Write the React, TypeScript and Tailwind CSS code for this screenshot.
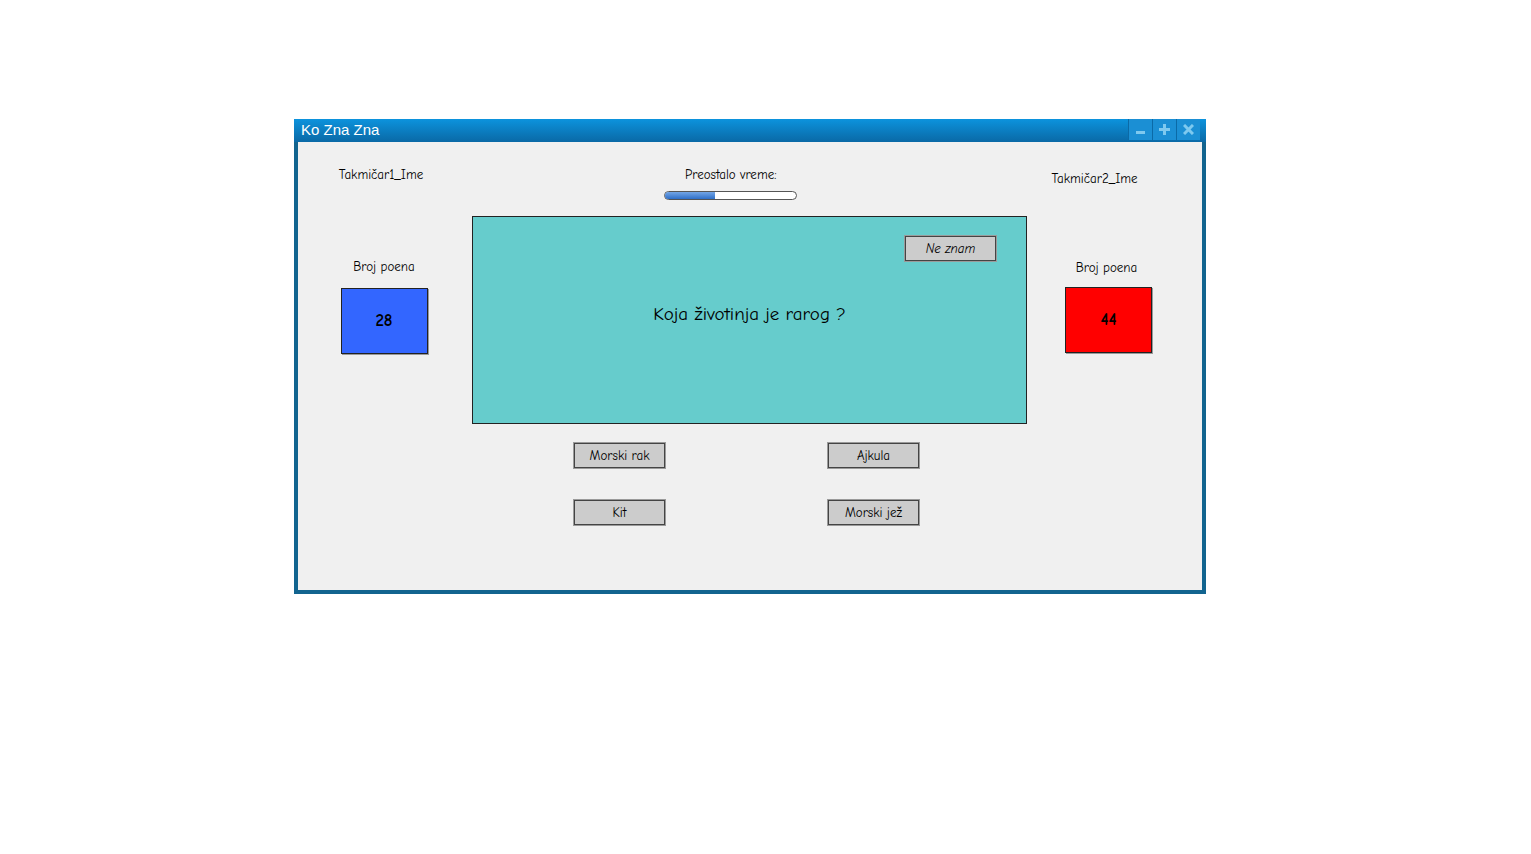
import React from "react";

const sketch = { fontFamily: '"Comic Sans MS", "Comic Neue", "DejaVu Sans", sans-serif' };

function SketchButton({ label, className = "" }: { label: string; className?: string }) {
  return (
    <div
      className={`w-[91px] h-[25px] bg-[#cccccc] border border-[#444] shadow-[0_0_0_1px_#9a9a9a] flex items-center justify-center text-[13px] text-black ${className}`}
    >
      {label}
    </div>
  );
}

function ScoreBox({ value, color }: { value: number; color: string }) {
  return (
    <div
      className={`w-[87px] h-[66px] ${color} border border-[#222] shadow-[1px_1px_0_#999] flex items-center justify-center text-[17px] font-bold text-black`}
    >
      {value}
    </div>
  );
}

function TitleButton({ children }: { children: React.ReactNode }) {
  return (
    <div className="w-[24px] h-[21px] bg-[#1b8fd4] border-l border-[#0b6aa6] flex items-center justify-center">
      {children}
    </div>
  );
}

export default function App() {
  return (
    <div className="w-[1531px] h-[854px] bg-white relative">
      <div className="pt-[119px] pl-[294px]">
        <div className="w-[912px] h-[475px] border-[4px] border-t-0 border-[#12648f] flex flex-col bg-[#f0f0f0]">
          {/* title bar */}
          <div className="h-[23px] -mx-[4px] bg-gradient-to-b from-[#0c93dd] to-[#0a69a6] flex items-center justify-between">
            <span className="pl-[7px] text-white text-[15px]" style={{ fontFamily: '"Liberation Sans", Arial, sans-serif' }}>
              Ko Zna Zna
            </span>
            <div className="flex pr-[6px] h-[21px] self-start">
              <TitleButton>
                <div className="w-[9px] h-[3px] bg-[#7ec9ef] mt-[6px]" />
              </TitleButton>
              <TitleButton>
                <svg width="11" height="11" viewBox="0 0 11 11">
                  <path d="M4 0h3v4h4v3H7v4H4V7H0V4h4z" fill="#7ec9ef" />
                </svg>
              </TitleButton>
              <TitleButton>
                <svg width="11" height="11" viewBox="0 0 11 11">
                  <path d="M1 1 L10 10 M10 1 L1 10" stroke="#7ec9ef" strokeWidth="3" />
                </svg>
              </TitleButton>
            </div>
          </div>

          {/* content */}
          <div className="flex flex-1" style={sketch}>
            {/* left player */}
            <div className="w-[174px] flex flex-col items-center">
              <div className="mt-[25px] text-[13px] leading-[16px] text-black -ml-[8px]">Takmičar1_Ime</div>
              <div className="mt-[76px] text-[13px] leading-[16px] text-black -ml-[2px]">Broj poena</div>
              <div className="mt-[13px] -ml-[2px]">
                <ScoreBox value={28} color="bg-[#3366ff]" />
              </div>
            </div>

            {/* center */}
            <div className="w-[555px] flex flex-col">
              <div className="mt-[25px] ml-[213px] text-[13px] leading-[16px] text-black">Preostalo vreme:</div>
              <div className="mt-[8px] ml-[192px] w-[133px] h-[9px] rounded-full border border-[#555] bg-white overflow-hidden">
                <div className="w-[50px] h-full bg-gradient-to-b from-[#74a6e6] to-[#2e6fc8]" />
              </div>
              <div className="mt-[16px] h-[208px] bg-[#66cccc] border border-[#222] flex flex-col">
                <div className="flex justify-end pr-[30px] pt-[19px]">
                  <SketchButton label="Ne znam" className="italic" />
                </div>
                <div className="mt-[41px] text-center text-[19px] leading-[24px] text-black">Koja životinja je rarog ?</div>
              </div>
              <div className="grid grid-cols-2 w-[345px] ml-[102px] mt-[19px] gap-x-[163px] gap-y-[32px]">
                <SketchButton label="Morski rak" />
                <SketchButton label="Ajkula" />
                <SketchButton label="Kit" />
                <SketchButton label="Morski jež" />
              </div>
            </div>

            {/* right player */}
            <div className="flex-1 flex flex-col items-center pr-[12px]">
              <div className="mt-[29px] text-[13px] leading-[16px] text-black -ml-[28px]">Takmičar2_Ime</div>
              <div className="mt-[73px] text-[13px] leading-[16px] text-black -ml-[4px]">Broj poena</div>
              <div className="mt-[11px]">
                <ScoreBox value={44} color="bg-[#ff0000]" />
              </div>
            </div>
          </div>
        </div>
      </div>
    </div>
  );
}
